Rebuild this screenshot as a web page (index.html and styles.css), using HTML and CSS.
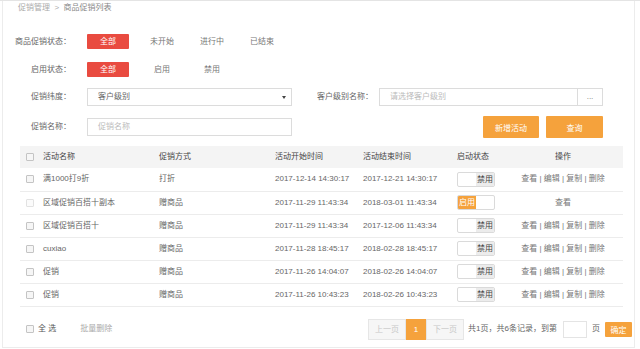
FILE: index.html
```html
<!DOCTYPE html>
<html lang="zh-CN">
<head>
    <meta charset="UTF-8">
    <meta name="viewport" content="width=device-width, initial-scale=1.0">
    <title>商品促销列表</title>
    <link rel="stylesheet" href="styles.css">
</head>
<body>
    <div class="page">
        <div class="crumb">促销管理 &nbsp;&gt;&nbsp; <span class="crumb-current">商品促销列表</span></div>

        <div class="filter-row row-status">
            <label class="filter-label">商品促销状态：</label>
            <div class="tabs">
                <span class="tab active">全部</span>
                <span class="tab">未开始</span>
                <span class="tab">进行中</span>
                <span class="tab">已结束</span>
            </div>
        </div>

        <div class="filter-row row-enable">
            <label class="filter-label">启用状态：</label>
            <div class="tabs">
                <span class="tab active">全部</span>
                <span class="tab">启用</span>
                <span class="tab">禁用</span>
            </div>
        </div>

        <div class="filter-row row-dim">
            <label class="filter-label">促销纬度：</label>
            <div class="select">
                <span>客户级别</span>
                <i class="caret"></i>
            </div>
            <label class="filter-label label-wide">客户级别名称：</label>
            <div class="input input-level">请选择客户级别</div>
            <button class="more-button">...</button>
        </div>

        <div class="filter-row row-name">
            <label class="filter-label">促销名称：</label>
            <div class="input">促销名称</div>
            <div class="actions">
                <button class="orange-button">新增活动</button>
                <button class="orange-button">查询</button>
            </div>
        </div>

        <table class="list">
            <colgroup>
                <col style="width:18px">
                <col style="width:116px">
                <col style="width:116px">
                <col style="width:88px">
                <col style="width:94px">
                <col style="width:51px">
                <col style="width:120px">
            </colgroup>
            <thead>
                <tr>
                    <th class="check-cell"><span class="checkbox"></span></th>
                    <th>活动名称</th>
                    <th>促销方式</th>
                    <th>活动开始时间</th>
                    <th>活动结束时间</th>
                    <th>启动状态</th>
                    <th class="ops">操作</th>
                </tr>
            </thead>
            <tbody>
                <tr>
                    <td class="check-cell"><span class="checkbox"></span></td>
                    <td>满1000打9折</td>
                    <td>打折</td>
                    <td>2017-12-14 14:30:17</td>
                    <td>2017-12-21 14:30:17</td>
                    <td><span class="toggle"><span class="toggle-half"></span><span class="toggle-half off">禁用</span></span></td>
                    <td class="ops">查看 | 编辑 | 复制 | 删除</td>
                </tr>
                <tr>
                    <td class="check-cell"><span class="checkbox disabled"></span></td>
                    <td>区域促销百搭十副本</td>
                    <td>赠商品</td>
                    <td>2017-11-29 11:43:34</td>
                    <td>2018-03-01 11:43:34</td>
                    <td><span class="toggle"><span class="toggle-half on">启用</span><span class="toggle-half"></span></span></td>
                    <td class="ops">查看</td>
                </tr>
                <tr>
                    <td class="check-cell"><span class="checkbox"></span></td>
                    <td>区域促销百搭十</td>
                    <td>赠商品</td>
                    <td>2017-11-29 11:43:34</td>
                    <td>2017-12-06 11:43:34</td>
                    <td><span class="toggle"><span class="toggle-half"></span><span class="toggle-half off">禁用</span></span></td>
                    <td class="ops">查看 | 编辑 | 复制 | 删除</td>
                </tr>
                <tr>
                    <td class="check-cell"><span class="checkbox"></span></td>
                    <td>cuxiao</td>
                    <td>赠商品</td>
                    <td>2017-11-28 18:45:17</td>
                    <td>2018-02-28 18:45:17</td>
                    <td><span class="toggle"><span class="toggle-half"></span><span class="toggle-half off">禁用</span></span></td>
                    <td class="ops">查看 | 编辑 | 复制 | 删除</td>
                </tr>
                <tr>
                    <td class="check-cell"><span class="checkbox"></span></td>
                    <td>促销</td>
                    <td>赠商品</td>
                    <td>2017-11-26 14:04:07</td>
                    <td>2018-02-26 14:04:07</td>
                    <td><span class="toggle"><span class="toggle-half"></span><span class="toggle-half off">禁用</span></span></td>
                    <td class="ops">查看 | 编辑 | 复制 | 删除</td>
                </tr>
                <tr>
                    <td class="check-cell"><span class="checkbox"></span></td>
                    <td>促销</td>
                    <td>赠商品</td>
                    <td>2017-11-26 10:43:23</td>
                    <td>2018-02-26 10:43:23</td>
                    <td><span class="toggle"><span class="toggle-half"></span><span class="toggle-half off">禁用</span></span></td>
                    <td class="ops">查看 | 编辑 | 复制 | 删除</td>
                </tr>
            </tbody>
        </table>

        <div class="footer">
            <div class="bulk">
                <span class="checkbox"></span>
                <span class="select-all">全 选</span>
                <span class="bulk-delete">批量删除</span>
            </div>
            <div class="pager">
                <span class="page-btn">上一页</span>
                <span class="page-num">1</span>
                <span class="page-btn">下一页</span>
                <span class="page-info">共1页，共6条记录，到第</span>
                <span class="page-input"></span>
                <span class="page-unit">页</span>
                <button class="page-go">确定</button>
            </div>
        </div>
    </div>
</body>
</html>
```

FILE: styles.css
```css
:root {
    --red: #e94b40;
    --orange: #f5a23c;
    --text: #666666;
    --line: #ececec;
}

* {
    box-sizing: border-box;
    margin: 0;
    padding: 0;
}

body {
    font-family: "Liberation Sans", "Noto Sans CJK SC", sans-serif;
    font-size: 8px;
    line-height: 10px;
    color: var(--text);
    background: #fff;
    border-top: 1px solid #e4e4e4;
}

button {
    font-family: inherit;
    font-size: 8px;
    border: none;
    cursor: pointer;
}

.page {
    margin: 0 5px 0 2px;
    height: 347px;
    border: 1px solid var(--line);
    border-top: none;
}

.crumb {
    height: 14px;
    padding-left: 15px;
    line-height: 14px;
    color: #aaa;
}

.crumb-current {
    color: #888;
}

.filter-row {
    display: flex;
    align-items: center;
}

.row-status {
    margin-top: 19px;
}

.row-enable {
    margin-top: 13px;
}

.row-dim {
    margin-top: 11px;
}

.row-name {
    margin-top: 10px;
}

.filter-label {
    width: 60px;
    margin-left: 8px;
    text-align: right;
    color: var(--text);
    flex-shrink: 0;
}

.label-wide {
    width: 81px;
    margin-left: 0;
}

.tabs {
    display: flex;
    margin-left: 16px;
}

.tab {
    width: 50px;
    height: 15px;
    line-height: 15px;
    text-align: center;
    color: #777;
}

.tab.active {
    width: 42px;
    margin-right: 8px;
    background: var(--red);
    color: #fff;
    border-radius: 1px;
}

.select,
.input {
    width: 205px;
    height: 18px;
    margin-left: 16px;
    border: 1px solid #dcdcdc;
    line-height: 16px;
    padding-left: 10px;
}

.select {
    display: flex;
    justify-content: space-between;
    align-items: center;
    padding-right: 5px;
    color: var(--text);
}

.caret {
    width: 0;
    height: 0;
    border-left: 2px solid transparent;
    border-right: 2px solid transparent;
    border-top: 3px solid #444;
}

.input {
    color: #bbb;
}

.input-level {
    width: 199px;
    margin-left: 6px;
}

.more-button {
    width: 25px;
    height: 18px;
    border: 1px solid #dcdcdc;
    border-left: none;
    background: #fff;
    color: #777;
    line-height: 14px;
}

.actions {
    display: flex;
    gap: 7px;
    margin-left: 191px;
}

.orange-button {
    height: 22px;
    width: 56px;
    background: var(--orange);
    color: #fff;
    border-radius: 1px;
}

.orange-button + .orange-button {
    width: 57px;
}

.list {
    margin: 8px 0 0 17px;
    width: 603px;
    border-collapse: collapse;
    table-layout: fixed;
}

.list th,
.list td {
    padding: 0 5px;
    text-align: left;
    white-space: nowrap;
    border-bottom: 1px solid var(--line);
    vertical-align: middle;
}

.list th {
    height: 22px;
    background: #f4f4f4;
    color: #444;
    font-weight: normal;
    border-bottom: none;
}

.list td {
    height: 23px;
    color: var(--text);
}

.list .check-cell {
    padding: 0 0 0 6px;
}

.list .ops {
    text-align: center;
    color: #777;
}

.list th.ops {
    color: #444;
}

.checkbox {
    display: block;
    width: 8px;
    height: 8px;
    border: 1px solid #c4c4c4;
    border-radius: 1px;
    background: #f6f6f6;
}

.checkbox.disabled {
    border-color: #e2e2e2;
    background: #fbfbfb;
}

.toggle {
    display: flex;
    width: 38px;
    height: 15px;
    border: 1px solid #dadada;
    border-radius: 2px;
    overflow: hidden;
    background: #fff;
}

.toggle-half {
    flex: 1;
    line-height: 13px;
    text-align: center;
}

.toggle-half.off {
    background: #ececec;
    color: #444;
}

.toggle-half.on {
    background: var(--orange);
    color: #fff;
}

.footer {
    display: flex;
    justify-content: space-between;
    align-items: center;
    margin: 12px 0 0 17px;
    width: 612px;
}

.bulk {
    display: flex;
    align-items: center;
    padding-left: 6px;
}

.select-all {
    margin-left: 4px;
    color: #555;
}

.bulk-delete {
    margin-left: 24px;
    color: #aaa;
}

.pager {
    display: flex;
    align-items: center;
}

.page-btn,
.page-num {
    height: 21px;
    line-height: 19px;
    text-align: center;
    border: 1px solid #e6e6e6;
    background: #f6f6f6;
    color: #c8c8c8;
}

.page-btn {
    width: 38px;
}

.page-num {
    width: 20px;
    background: var(--orange);
    border-color: var(--orange);
    color: #fff;
}

.page-info {
    margin-left: 4px;
    color: var(--text);
}

.page-input {
    width: 24px;
    height: 17px;
    margin-left: 6px;
    border: 1px solid #e4e4e4;
}

.page-unit {
    margin-left: 5px;
}

.page-go {
    width: 27px;
    height: 15px;
    margin-left: 5px;
    background: var(--orange);
    color: #fff;
    border-radius: 1px;
}
```
